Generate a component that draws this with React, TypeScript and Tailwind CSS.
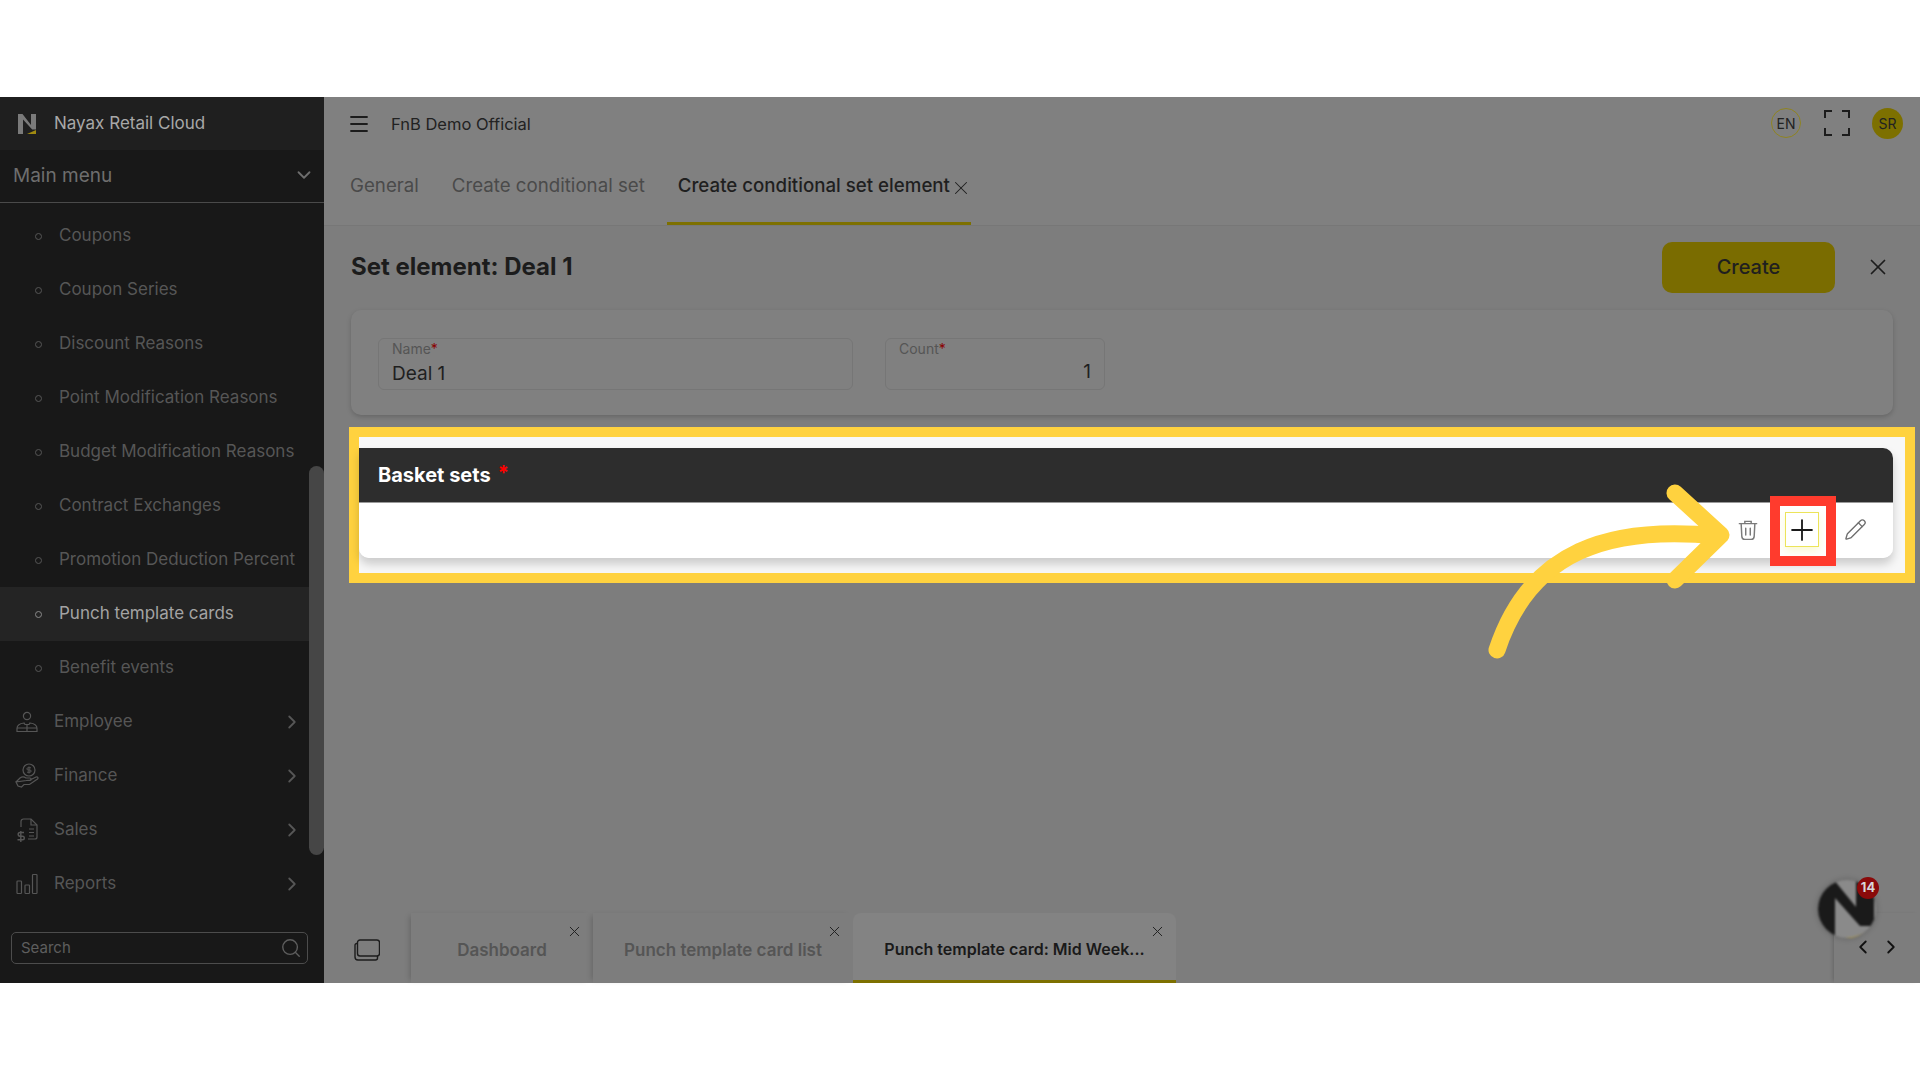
import React from 'react'
import { ChevronDown, ChevronLeft, ChevronRight, Menu, Pencil, Plus, Search, X } from 'lucide-react'

const subItems = [
  'Coupons',
  'Coupon Series',
  'Discount Reasons',
  'Point Modification Reasons',
  'Budget Modification Reasons',
  'Contract Exchanges',
  'Promotion Deduction Percent',
  'Punch template cards',
  'Benefit events',
]

function EmployeeIcon() {
  return (
    <svg width="22" height="22" viewBox="0 0 22 22" fill="none" stroke="currentColor" strokeWidth="1.2">
      <circle cx="11" cy="5" r="3.6" />
      <path d="M1 20.5v-3c0-3 3-5 7-5.5l1 1.5h4l1-1.5c4 .5 7 2.5 7 5.5v3z" />
      <path d="M11 13.5v7M1 17h20" />
    </svg>
  )
}

function FinanceIcon() {
  return (
    <svg width="24" height="26" viewBox="0 0 24 26" fill="none" stroke="currentColor" strokeWidth="1.2">
      <circle cx="14" cy="7" r="6" />
      <path d="M16 4.8h-3a1.1 1.1 0 0 0 0 2.2h2a1.1 1.1 0 0 1 0 2.2h-3M14 3.5v7" strokeWidth="1" />
      <path d="M1 19l4-4c2-1.5 4-1.5 6 0h4c1.500 0 1.500 2.500 0 2.500h-4M15 17l6-3c2-.5 2.500 1 1.500 2l-8 5.500H9l-2.500 2.500L3 23l-2-4z" />
    </svg>
  )
}

function SalesIcon() {
  return (
    <svg width="22" height="26" viewBox="0 0 22 26" fill="none" stroke="currentColor" strokeWidth="1.2">
      <path d="M5 10V4.500A2.500 2.500 0 0 1 7.500 2H15l6 6v12a2 2 0 0 1-2 2h-7" />
      <path d="M15 2v6h6M13 12h5M13 15.500h5M13 19h5" />
      <path d="M8 15.500H4a1.800 1.800 0 0 0 0 3.700h2.500a1.800 1.800 0 0 1 0 3.600H1.500M4.800 14v11" strokeWidth="1.400" />
    </svg>
  )
}

function ReportsIcon() {
  return (
    <svg width="22" height="22" viewBox="0 0 22 22" fill="none" stroke="currentColor" strokeWidth="1.2">
      <rect x="1" y="8" width="4.500" height="12.500" rx=".8" />
      <rect x="9" y="12" width="4.500" height="8.500" rx=".8" />
      <rect x="16.500" y="1.500" width="4.500" height="19" rx=".8" />
    </svg>
  )
}

function TrashIcon() {
  return (
    <svg width="20" height="22" viewBox="0 0 22 24" fill="none" stroke="#7b7b7b" strokeWidth="1.6" strokeLinecap="round">
      <path d="M1.500 5h19M7.500 5V2.500h7V5" />
      <path d="M3.500 5.500l.7 13.500c.1 2 1.300 3.300 3.300 3.300h7c2 0 3.200-1.300 3.300-3.300l.7-13.500" />
      <path d="M8.500 10v7.500M13.500 10v7.500" />
    </svg>
  )
}

function FullscreenIcon() {
  return (
    <svg width="26" height="26" viewBox="0 0 26 26" fill="none" stroke="#1c1c1c" strokeWidth="2">
      <path d="M1 8V1h7M18 1h7v7M25 18v7h-7M8 25H1v-7" />
    </svg>
  )
}

function WindowsIcon() {
  return (
    <svg width="26" height="22" viewBox="0 0 26 22" fill="none" stroke="#1c1c1c" strokeWidth="1.400">
      <rect x="3.500" y="1" width="22" height="16" rx="2.500" />
      <path d="M3.500 4.500H2.800A1.800 1.800 0 0 0 1 6.300V18a3 3 0 0 0 3 3h17.500a2 2 0 0 0 2-2v-2" />
    </svg>
  )
}

function BrandLogo() {
  return (
    <svg width="20" height="22" viewBox="0 0 20 22">
      <path d="M1 21V1h4.500l8.500 11V1h5v15.500h-3.800L6 6.500V21z" fill="#7a7a7a" />
      <path d="M10 21l9-4v4z" fill="#a08a10" />
    </svg>
  )
}

function SideItem({ label, active }: { label: string; active?: boolean }) {
  return (
    <div className={`flex h-[54px] items-center pl-[35px] ${active ? 'bg-[#242424] text-[#a3a3a3]' : 'text-[#565656]'}`}>
      <span className={`h-[7px] w-[7px] rounded-full border ${active ? 'border-[#8a8a8a]' : 'border-[#565656]'}`} />
      <span className="ml-[17px] text-[17px] whitespace-nowrap">{label}</span>
    </div>
  )
}

function SideGroup({ label, icon }: { label: string; icon: React.ReactNode }) {
  return (
    <div className="flex h-[54px] items-center pr-[21px] pl-[15px] text-[#565656]">
      <span className="flex w-[24px] justify-center">{icon}</span>
      <span className="ml-[15px] flex-1 text-[17px]">{label}</span>
      <ChevronRight size={22} strokeWidth={2} />
    </div>
  )
}

function Sidebar() {
  return (
    <aside className="relative flex w-[324px] shrink-0 flex-col bg-[#181818]">
      <div className="flex h-[53px] items-center bg-[#1f1f1f] pl-[17px]">
        <BrandLogo />
        <span className="ml-[17px] pt-[1px] text-[17px] text-[#a8a8a8]">Nayax Retail Cloud</span>
      </div>
      <div className="flex h-[53px] items-center justify-between border-b border-[#4a4a4a] pr-[9px] pl-[13px] text-[#6e6e6e]">
        <span className="text-[19px]">Main menu</span>
        <ChevronDown size={22} className="-mt-[3px]" />
      </div>
      <div className="pt-[6px]">
        {subItems.map((item) => (
          <SideItem key={item} label={item} active={item === 'Punch template cards'} />
        ))}
        <SideGroup label="Employee" icon={<EmployeeIcon />} />
        <SideGroup label="Finance" icon={<FinanceIcon />} />
        <SideGroup label="Sales" icon={<SalesIcon />} />
        <SideGroup label="Reports" icon={<ReportsIcon />} />
      </div>
      <div className="mt-[21px] ml-[11px] flex h-[32px] w-[297px] items-center justify-between rounded-[5px] border border-[#4c4c4c] pr-[5px] pl-[9px] text-[#5e5e5e]">
        <span className="text-[15px]">Search</span>
        <Search size={22} strokeWidth={1.5} />
      </div>
      <div className="absolute top-[369px] right-0 h-[389px] w-[15px] rounded-t-[8px] rounded-b-[8px] bg-[#464646]" />
    </aside>
  )
}

function Field({ label, value, className, right }: { label: string; value: string; className: string; right?: boolean }) {
  return (
    <div className={`h-[52px] rounded-[6px] border border-[#767676] px-[13px] ${className}`}>
      <div className="pt-[2px] text-[14px] leading-[16px] text-[#555555]">
        {label}
        <span className="text-[#8a0000]">*</span>
      </div>
      <div className={`pt-[4px] text-[19px] leading-[26px] text-[#1f1f1f] ${right ? '-mt-[2px] text-right' : ''}`}>{value}</div>
    </div>
  )
}

function BottomTab({ label, className, active }: { label: string; className: string; active?: boolean }) {
  return (
    <div
      className={`relative flex h-full items-center justify-center pt-[5px] font-semibold ${className} ${
        active
          ? 'rounded-t-[8px] border-b-[3px] border-[#7d7000] bg-[#838383] text-[16px] text-[#1a1a1a]'
          : 'text-[17px] text-[#555555] shadow-[-4px_0_6px_-3px_rgba(0,0,0,0.2)]'
      }`}
    >
      <span className="whitespace-nowrap">{label}</span>
      <X size={17} strokeWidth={1.4} className="absolute top-[10px] right-[10px] text-[#222222]" />
    </div>
  )
}

function Highlight() {
  return (
    <div className="relative mt-[12px] mr-[5px] ml-[25px] border-[10px] border-[#ffd23f] bg-[#f7f7f7] pt-[11px] pr-[12px] pb-[15px]">
      <div className="overflow-hidden rounded-tr-[10px] rounded-b-[10px] shadow-[0_6px_10px_rgba(0,0,0,0.18)]">
        <div className="flex h-[55px] items-center border-b border-[#9a9a9a] bg-[#2d2d2d] pl-[19px]">
          <span className="text-[20px] font-bold text-white">Basket sets</span>
          <span className="mb-[4px] ml-[7px] text-[20px] leading-none font-bold text-[#ff0000]">*</span>
        </div>
        <div className="flex h-[55px] items-center justify-end bg-white pr-[26px] pb-[2px]">
          <TrashIcon />
          <div className="mr-[25px] ml-[27px] flex h-[35px] w-[34px] shrink-0 items-center justify-center border border-[#ece45a] shadow-[0_4px_8px_rgba(240,230,80,0.25)]">
            <Plus size={34} strokeWidth={1.3} className="shrink-0 text-[#1a1a1a]" />
          </div>
          <Pencil size={23} strokeWidth={1.4} className="text-[#6f6f6f]" />
        </div>
      </div>
      {/* red marker round the plus button */}
      <div className="absolute top-[59px] right-[69px] h-[70px] w-[66px] border-[10px] border-[#ff3b2d]" />
    </div>
  )
}

function Arrow() {
  return (
    <svg className="absolute top-[480px] left-[1480px]" width="260" height="190" viewBox="1480 480 260 190" fill="none">
      <path
        d="M1497 650C1530 550 1610 525 1718 536M1675 493L1721 535L1675 580"
        stroke="#ffd23f"
        strokeWidth="17"
        strokeLinecap="round"
        strokeLinejoin="round"
      />
    </svg>
  )
}

function NayaxBubble() {
  return (
    <div className="absolute top-[880px] left-[1818px] h-[58px] w-[58px]">
      <svg width="58" height="58" viewBox="0 0 58 58" className="rounded-full bg-[#8a8a8a] shadow-[0_0_6px_rgba(0,0,0,0.25)] blur-[1px]">
        <path d="M0 58V0h16l22 27V0h18v46H42L17 18v40z" fill="#1a1a1a" />
        <path d="M27 58c12-1 23-5 30-14l-1 14z" fill="#c9a526" />
      </svg>
      <div className="absolute -top-[3px] -right-[3px] flex h-[22px] w-[22px] items-center justify-center rounded-full bg-[#8a0a0a] text-[13px] font-bold text-[#d8d8d8]">
        14
      </div>
    </div>
  )
}

export default function App() {
  return (
    <div className="relative flex h-[1080px] w-[1920px] flex-col overflow-hidden bg-white font-['Inter','Liberation_Sans',sans-serif]">
      <div className="h-[97px] shrink-0" />
      <main className="flex h-[886px] shrink-0">
        <Sidebar />
        <div className="flex min-w-0 flex-1 flex-col bg-[#7d7d7d]">
          <div className="flex h-[129px] shrink-0 flex-col border-b border-[#777777] bg-[#808080]">
            <div className="flex h-[54px] items-center pr-[17px] pl-[23px]">
              <Menu size={24} strokeWidth={1.8} className="text-[#1c1c1c]" />
              <span className="ml-[20px] text-[16.5px] text-[#222222]">FnB Demo Official</span>
              <div className="-mt-[2px] ml-auto flex items-center">
                <div className="flex h-[30px] w-[30px] items-center justify-center rounded-full border border-[#8f8420] text-[14px] text-[#222222]">EN</div>
                <span className="mr-[22px] ml-[23px]">
                  <FullscreenIcon />
                </span>
                <div className="flex h-[31px] w-[31px] items-center justify-center rounded-full bg-[#7d7000] text-[14px] text-[#222222]">SR</div>
              </div>
            </div>
            <div className="flex flex-1 items-stretch pl-[13px] text-[18.7px]">
              <div className="flex items-center px-[13px] pb-[3px] text-[#4a4a4a]">General</div>
              <div className="flex items-center pr-[22px] pb-[3px] pl-[20px] whitespace-nowrap text-[#4a4a4a]">Create conditional set</div>
              <div className="flex w-[304px] items-center border-b-[3px] border-[#7d7000] pl-[11px] font-medium whitespace-nowrap text-[#1f1f1f]">
                Create conditional set element
                <X size={22} strokeWidth={1.1} className="mt-[2px] shrink-0" />
              </div>
            </div>
          </div>

          <div className="flex h-[84px] shrink-0 items-center justify-between pr-[29px] pb-[2px] pl-[27px]">
            <h1 className="text-[24px] font-bold text-[#1c1c1c]">Set element: Deal 1</h1>
            <div className="flex items-center">
              <div className="flex h-[51px] w-[173px] items-center justify-center rounded-[10px] bg-[#7a6c00] text-[20px] font-medium text-[#1f1f1f]">Create</div>
              <X size={26} strokeWidth={1.6} className="ml-[30px] text-[#1c1c1c]" />
            </div>
          </div>

          <div className="mr-[27px] ml-[27px] flex h-[105px] shrink-0 items-start gap-[32px] rounded-[10px] bg-[#808080] pt-[28px] pl-[27px] shadow-[0_2px_5px_rgba(0,0,0,0.18)]">
            <Field label="Name" value="Deal 1" className="w-[475px]" />
            <Field label="Count" value="1" className="w-[220px]" right />
          </div>

          <Highlight />

          <div className="flex-1" />

          <div className="flex h-[70px] shrink-0 items-stretch">
            <div className="flex w-[87px] items-center justify-center pt-[4px] pr-[2px]">
              <WindowsIcon />
            </div>
            <BottomTab label="Dashboard" className="w-[182px]" />
            <BottomTab label="Punch template card list" className="w-[260px]" />
            <BottomTab label="Punch template card: Mid Week..." className="w-[323px]" active />
            <div className="ml-auto flex w-[86px] items-center justify-center gap-[6px] pb-[2px] text-[#111111] shadow-[-3px_0_4px_-2px_rgba(0,0,0,0.2)]">
              <ChevronLeft size={22} strokeWidth={2} />
              <ChevronRight size={22} strokeWidth={2} />
            </div>
          </div>
        </div>
      </main>
      <Arrow />
      <NayaxBubble />
    </div>
  )
}
